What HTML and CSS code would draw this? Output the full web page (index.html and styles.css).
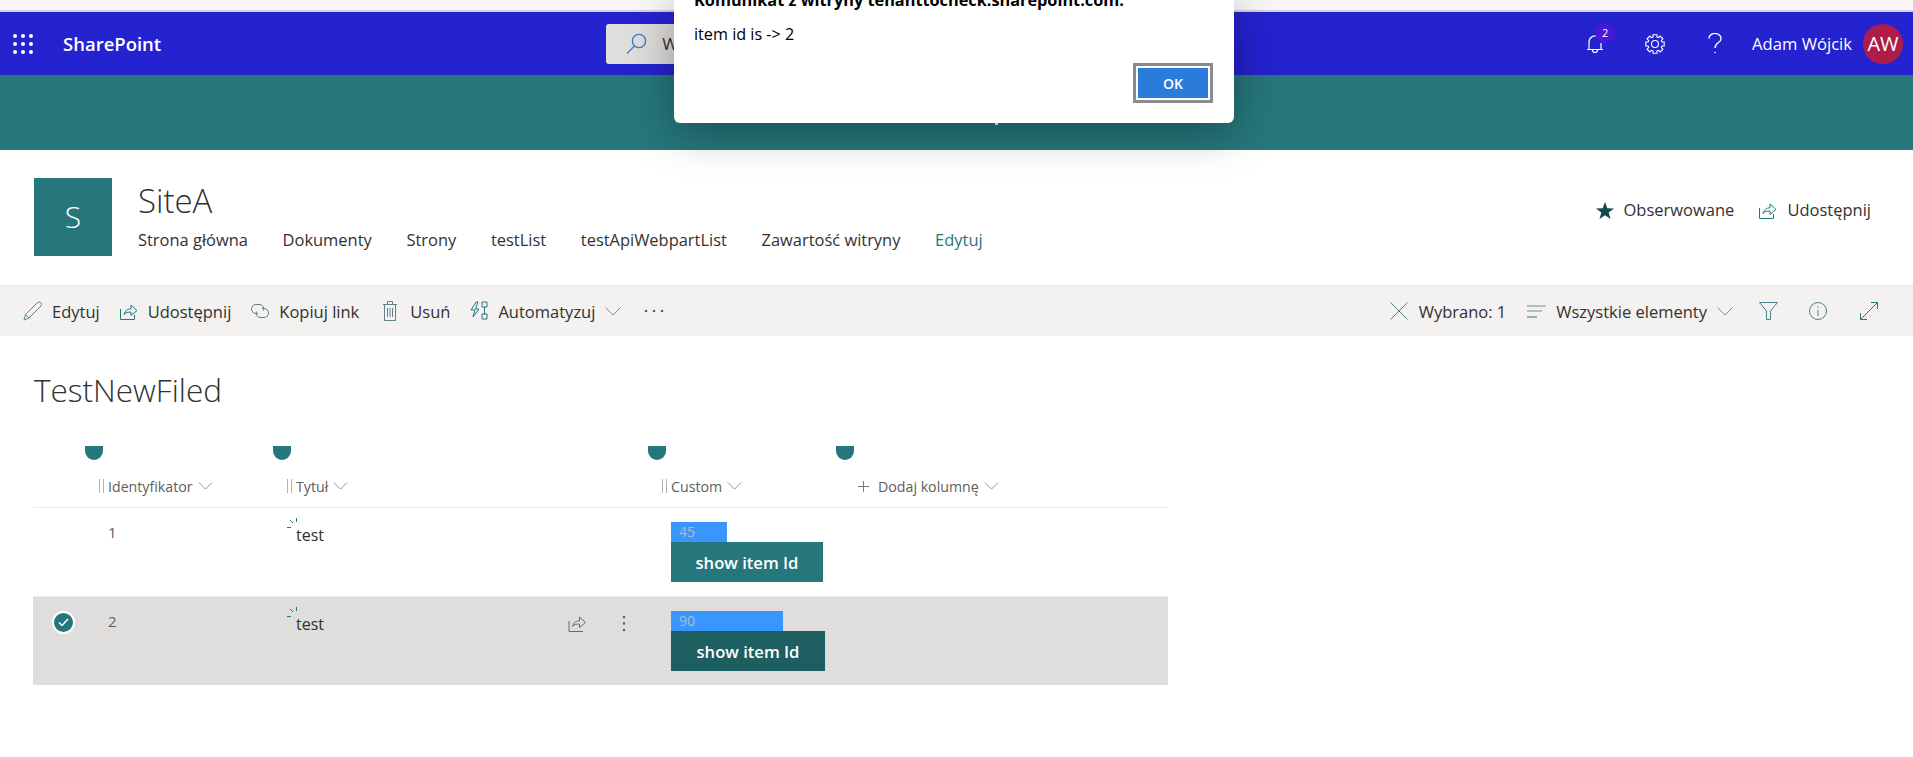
FILE: index.html
```html
<!DOCTYPE html>
<html lang="pl">
<head>
    <meta charset="UTF-8">
    <meta name="viewport" content="width=device-width, initial-scale=1.0">
    <title>TestNewFiled</title>
    <link rel="stylesheet" href="styles.css">
</head>
<body>
    <div class="browser-strip"></div>

    <header class="suite-bar">
        <svg class="waffle" width="20" height="20" viewBox="0 0 20 20" fill="#fff">
            <circle cx="2" cy="2" r="2"/><circle cx="10" cy="2" r="2"/><circle cx="18" cy="2" r="2"/>
            <circle cx="2" cy="10" r="2"/><circle cx="10" cy="10" r="2"/><circle cx="18" cy="10" r="2"/>
            <circle cx="2" cy="18" r="2"/><circle cx="10" cy="18" r="2"/><circle cx="18" cy="18" r="2"/>
        </svg>
        <span class="brand">SharePoint</span>
        <div class="search">
            <svg width="21" height="21" viewBox="0 0 21 21" fill="none" stroke="#3a7cc4" stroke-width="1.3">
                <circle cx="13" cy="8" r="6.6"/><path d="M8.5 13 1 20.5"/>
            </svg>
            <span class="search-text">W</span>
        </div>
        <div class="suite-right">
            <div class="bell">
                <svg width="18" height="20" viewBox="0 0 18 20" fill="none" stroke="#fff" stroke-width="1.2">
                    <path d="M3 15V8a6 6 0 0 1 9-5.2M15 9v6M1 15.5h16M6.5 16a2.5 2.5 0 0 0 5 0"/>
                </svg>
                <span class="badge">2</span>
            </div>
            <svg class="gear" width="20" height="20" viewBox="0 0 20 20" fill="none" stroke="#fff" stroke-width="1.1">
                <polygon points="8.02,3.08 8.05,.81 11.95,.81 11.98,3.08 13.49,3.7 15.12,2.12 17.88,4.88 16.3,6.51 16.92,8.02 19.19,8.05 19.19,11.95 16.92,11.98 16.3,13.49 17.88,15.12 15.12,17.88 13.49,16.3 11.98,16.92 11.95,19.19 8.05,19.19 8.02,16.92 6.51,16.3 4.88,17.88 2.12,15.12 3.7,13.49 3.08,11.98 .81,11.95 .81,8.05 3.08,8.02 3.7,6.51 2.12,4.88 4.88,2.12 6.51,3.7"/>
                <circle cx="10" cy="10" r="3.5"/>
            </svg>
            <svg class="help" width="14" height="21" viewBox="0 0 14 21" fill="none" stroke="#fff" stroke-width="1.3">
                <path d="M1 5.5a6 5 0 1 1 9.5 4c-2.5 1.7-3.5 2.5-3.5 5.5"/>
                <circle cx="7" cy="19.5" r=".8" fill="#fff" stroke="none"/>
            </svg>
            <span class="user-name">Adam Wójcik</span>
            <span class="avatar">AW</span>
        </div>
    </header>

    <div class="hero"></div>

    <section class="site-header">
        <div class="site-logo">S</div>
        <div class="site-info">
            <div class="site-title">SiteA</div>
            <nav class="site-nav">
                <a>Strona główna</a>
                <a>Dokumenty</a>
                <a>Strony</a>
                <a>testList</a>
                <a>testApiWebpartList</a>
                <a>Zawartość witryny</a>
                <a class="nav-edit">Edytuj</a>
            </nav>
        </div>
        <div class="site-actions">
            <span class="action">
                <svg width="18" height="17" viewBox="0 0 18 17" fill="#134a4e"><path d="M9 0l2.3 6.2 6.7.3-5.3 4.1 1.8 6.4L9 13.3 3.5 17l1.8-6.4L0 6.5l6.7-.3z"/></svg>
                Obserwowane
            </span>
            <span class="action">
                <svg width="18" height="17" viewBox="0 0 18 17" fill="none" stroke="#26777c"><path d="M.5 6v10.5h14V12M4 11.5C5 7.5 8 5.8 11 5.8V2l6 5.5-6 5V9C8 9 5.500 9.500 4 11.5z"/></svg>
                Udostępnij
            </span>
        </div>
    </section>

    <div class="command-bar">
        <div class="commands">
            <span class="cmd">
                <svg width="19" height="20" viewBox="0 0 19 20" fill="none" stroke="#5f8285"><path d="M1 19l1.5-5.5L14.5 1.5a2.5 2.5 0 0 1 3.5 3.5L6 17zM2.5 13.5 6 17"/></svg>
                Edytuj
            </span>
            <span class="cmd">
                <svg width="18" height="17" viewBox="0 0 18 17" fill="none" stroke="#26777c"><path d="M.5 6v10.5h14V12M4 11.5C5 7.5 8 5.8 11 5.8V2l6 5.5-6 5V9C8 9 5.500 9.500 4 11.5z"/></svg>
                Udostępnij
            </span>
            <span class="cmd">
                <svg width="18" height="14" viewBox="0 0 18 14" fill="none" stroke="#5f8285"><path d="M7 9.5H5a4.5 4.5 0 0 1 0-9h4a4.5 4.5 0 0 1 3.5 6"/><path d="M11 4.5h2a4.500 4.500 0 0 1 0 9H9a4.500 4.500 0 0 1-3.500-6"/></svg>
                Kopiuj link
            </span>
            <span class="cmd cmd-trash">
                <svg width="16" height="20" viewBox="0 0 15 20" fill="none" stroke="#5f8285"><path d="M2 4v15.5h11V4M.5 3.5h14M5 3.5V.5h5v3M5 7v9M7.5 7v9M10 7v9"/></svg>
                Usuń
            </span>
            <span class="cmd">
                <svg width="18" height="20" viewBox="0 0 18 20" fill="none" stroke="#26777c"><path d="M6 1 1 9h4l-2 7 6-8H5.5L8 1zM12 1h5v5h-5zM12 13h5v5h-5zM14.5 6v7"/></svg>
                Automatyzuj
            </span>
            <svg class="chev cmd-chev" width="16" height="9" viewBox="0 0 16 9"><path d="M.5.5 8 8 15.5.5"/></svg>
            <svg class="more" width="20" height="4" viewBox="0 0 20 4" fill="#605e5c"><circle cx="2" cy="2" r="1.3"/><circle cx="10" cy="2" r="1.3"/><circle cx="18" cy="2" r="1.3"/></svg>
        </div>
        <div class="commands commands-right">
            <span class="cmd cmd-close">
                <svg width="18" height="18" viewBox="0 0 18 18" fill="none" stroke="#4d8286"><path d="M.5.5l17 17M17.5.5l-17 17"/></svg>
                Wybrano: 1
            </span>
            <span class="cmd cmd-view">
                <svg width="19" height="13" viewBox="0 0 19 13" fill="none"><path d="M0 1h19M0 6h15" stroke="#7a8788"/><path d="M0 12h10" stroke="#26777c"/></svg>
                Wszystkie elementy
            </span>
            <svg class="chev view-chev" width="16" height="9" viewBox="0 0 16 9"><path d="M.5.5 8 8 15.5.5"/></svg>
            <svg class="tool-funnel" width="19" height="18" viewBox="0 0 19 18" fill="none" stroke="#4d8286"><path d="M.5.5h18l-7 8.5v8.500h-4V9z"/></svg>
            <svg class="tool-info" width="18" height="18" viewBox="0 0 18 18" fill="none" stroke="#4d8286"><circle cx="9" cy="9" r="8.5"/><path d="M9 8v6M9 4.500v1.500"/></svg>
            <svg class="tool-expand" width="18" height="18" viewBox="0 0 18 18" fill="none" stroke="#26777c"><path d="M.5 17.5l17-17M11 .5h6.5V7M.5 11v6.500H7"/></svg>
        </div>
    </div>

    <main class="content">
        <h1 class="list-title">TestNewFiled</h1>

        <div class="handles">
            <span class="handle"></span>
            <span class="handle"></span>
            <span class="handle"></span>
            <span class="handle"></span>
        </div>

        <div class="list-row list-head">
            <div></div>
            <div class="col-head"><span class="grip"></span>Identyfikator<svg class="chev" width="15" height="8" viewBox="0 0 16 9"><path d="M.5.5 8 8 15.5.5"/></svg></div>
            <div class="col-head"><span class="grip"></span>Tytuł<svg class="chev" width="15" height="8" viewBox="0 0 16 9"><path d="M.5.5 8 8 15.5.5"/></svg></div>
            <div class="col-head"><span class="grip"></span>Custom<svg class="chev" width="15" height="8" viewBox="0 0 16 9"><path d="M.5.5 8 8 15.5.5"/></svg></div>
            <div class="col-head col-add">
                <svg width="11" height="11" viewBox="0 0 11 11" stroke="#7a7876"><path d="M5.5 0v11M0 5.5h11"/></svg>
                Dodaj kolumnę<svg class="chev" width="15" height="8" viewBox="0 0 16 9"><path d="M.5.5 8 8 15.5.5"/></svg>
            </div>
        </div>

        <div class="list-row item">
            <div></div>
            <div class="cell-id">1</div>
            <div class="cell-title">
                <svg class="spinner" width="11" height="11" viewBox="0 0 11 11" fill="none" stroke="#26777c"><path d="M9.5 0v4M3 2l3 3M0 9.5h4"/></svg>
                <span>test</span>
            </div>
            <div class="cell-custom">
                <div class="bar" style="width:56px">45</div>
                <button class="show-btn">show item Id</button>
            </div>
        </div>

        <div class="list-row item selected">
            <div class="cell-check">
                <span class="check">
                    <svg width="11" height="9" viewBox="0 0 11 9" fill="none" stroke="#fff" stroke-width="1.5"><path d="M1 4.5 4 7.5 10 1"/></svg>
                </span>
            </div>
            <div class="cell-id">2</div>
            <div class="cell-title">
                <svg class="spinner" width="11" height="11" viewBox="0 0 11 11" fill="none" stroke="#26777c"><path d="M9.5 0v4M3 2l3 3M0 9.5h4"/></svg>
                <span>test</span>
                <svg class="row-share" width="19" height="17" viewBox="0 0 18 17" fill="none" stroke="#6b6a68"><path d="M.5 6v10.5h14M4 11.5C5 7.5 8 5.8 11 5.8V2l6 5.5-6 5V9C8 9 5.500 9.500 4 11.5z"/></svg>
                <svg class="row-more" width="4" height="17" viewBox="0 0 4 17" fill="#605e5c"><circle cx="2" cy="2" r="1.2"/><circle cx="2" cy="8.5" r="1.2"/><circle cx="2" cy="15" r="1.2"/></svg>
            </div>
            <div class="cell-custom">
                <div class="bar" style="width:112px">90</div>
                <button class="show-btn show-btn-active">show item Id</button>
            </div>
        </div>
    </main>

    <div class="dialog">
        <div class="dialog-title">Komunikat z witryny tenanttocheck.sharepoint.com:</div>
        <div class="dialog-text">item id is -&gt; 2</div>
        <div class="dialog-buttons"><button class="dialog-ok">OK</button></div>
    </div>
</body>
</html>
```

FILE: styles.css
```css
* {
    box-sizing: border-box;
}

body {
    margin: 0;
    font-family: "Open Sans", "Noto Sans", sans-serif;
    color: #323130;
    background-color: #fff;
    overflow: hidden;
}

.browser-strip {
    height: 12px;
    background-color: #f7f7f7;
    border-bottom: 2px solid #d2d2d2;
}

/* top bar */
.suite-bar {
    height: 63px;
    display: flex;
    align-items: center;
    background-color: #2522d0;
    color: #fff;
}

.waffle {
    margin-left: 13px;
}

.brand {
    margin-left: 30px;
    font-size: 18.5px;
    font-weight: 600;
}

.search {
    width: 300px;
    height: 40px;
    margin-left: 445px;
    padding-left: 20px;
    display: flex;
    align-items: center;
    gap: 15px;
    border-radius: 3px;
    background-color: #e0dedc;
    color: #323130;
    font-size: 17px;
}

.suite-right {
    margin-left: auto;
    display: flex;
    align-items: center;
    padding-right: 10px;
}

.bell {
    position: relative;
    display: flex;
    margin-right: 41px;
}

.badge {
    position: absolute;
    top: -11px;
    left: 9px;
    width: 20px;
    height: 20px;
    border-radius: 50%;
    background-color: #4a17d8;
    font-size: 11px;
    line-height: 20px;
    text-align: center;
}

.gear {
    margin-right: 43px;
}

.help {
    margin-right: 30px;
}

.user-name {
    font-size: 16.6px;
    margin-right: 11px;
}

.avatar {
    width: 40px;
    height: 40px;
    border-radius: 50%;
    background-color: #ae1d4a;
    font-size: 20px;
    line-height: 40px;
    text-align: center;
}

.hero {
    height: 75px;
    background-color: #26777c;
}

/* site header */
.site-header {
    height: 135px;
    padding: 28px 42px 0 34px;
    display: flex;
    align-items: flex-start;
}

.site-logo {
    width: 78px;
    height: 78px;
    background-color: #26777c;
    color: #fff;
    font-size: 30px;
    font-weight: 300;
    line-height: 78px;
    text-align: center;
}

.site-info {
    margin-left: 26px;
}

.site-title {
    height: 46px;
    font-size: 33px;
    font-weight: 300;
    line-height: 46px;
}

.site-nav {
    display: flex;
    gap: 34.7px;
    margin-top: 4px;
    font-size: 16.45px;
    line-height: 24px;
}

.nav-edit {
    color: #26777c;
}

.site-actions {
    margin-left: auto;
    margin-top: 20px;
    display: flex;
    gap: 25px;
    font-size: 16.5px;
    line-height: 24px;
}

.action {
    display: flex;
    align-items: center;
    gap: 10px;
}

/* command bar */
.command-bar {
    height: 51px;
    padding: 0 35px 0 23px;
    display: flex;
    align-items: center;
    justify-content: space-between;
    background-color: #f3f2f1;
    border-top: 1px solid #e8e7e6;
}

.commands {
    display: flex;
    align-items: center;
    gap: 20px;
}

.commands-right {
    gap: 21px;
}

.cmd {
    display: flex;
    align-items: center;
    gap: 10px;
    font-size: 16.5px;
}

.cmd-close {
    gap: 11px;
}

.cmd-trash {
    gap: 12px;
    margin-left: 3px;
}

.chev {
    fill: none;
    stroke: #8a8886;
}

.cmd-chev {
    margin-left: -10px;
}

.more {
    margin-left: 3px;
}

.view-chev {
    margin-left: -11px;
}

.tool-funnel {
    margin-left: 5px;
}

.tool-info {
    margin-left: 10px;
}

.tool-expand {
    margin-left: 12px;
}

/* list */
.content {
    padding-left: 33px;
}

.list-title {
    margin: 0;
    padding: 32px 0 0 1px;
    height: 110px;
    font-size: 31.5px;
    font-weight: 300;
    line-height: 44px;
}

.handles {
    height: 14px;
    padding-left: 52px;
    display: grid;
    grid-template-columns: 187.5px 375px 188px 18px;
}

.handle {
    width: 18px;
    height: 14px;
    border-radius: 0 0 9px 9px;
    background-color: #26777c;
}

.list-row {
    width: 1135px;
    display: grid;
    grid-template-columns: 66px 188px 375px 196px 1fr;
}

.list-head {
    height: 48px;
    padding-top: 9px;
    border-bottom: 1px solid #edebe9;
    font-size: 14.2px;
    color: #605e5c;
}

.col-head {
    display: flex;
    align-items: center;
    height: 34px;
}

.col-head .chev {
    margin-left: 5px;
}

.grip {
    width: 5px;
    height: 14px;
    margin-right: 4px;
    border-left: 1px solid #b5b3b1;
    border-right: 1px solid #b5b3b1;
}

.col-add svg:first-child {
    margin-right: 9px;
}

.item {
    height: 88px;
    padding-top: 14px;
}

.selected {
    height: 89px;
    background-color: #e0dedc;
    border-top: 1px solid #ecebe9;
    padding-top: 14px;
}

.cell-check {
    padding-left: 19px;
}

.check {
    width: 23px;
    height: 23px;
    display: flex;
    align-items: center;
    justify-content: center;
    border-radius: 50%;
    border: 2px solid #fff;
    background-color: #26777c;
}

.cell-id {
    padding-left: 9px;
    font-size: 15px;
    color: #605e5c;
    line-height: 21px;
}

.cell-title {
    position: relative;
    display: flex;
    align-items: flex-start;
    padding: 1px 0 0 9px;
    font-size: 16px;
    line-height: 24px;
}

.spinner {
    position: absolute;
    left: 0;
    top: -4px;
}

.row-share {
    margin-left: 244px;
    margin-top: 3px;
}

.row-more {
    margin-left: 35px;
    margin-top: 3px;
}

.cell-custom {
    padding-left: 9px;
}

.bar {
    height: 20px;
    padding-left: 8px;
    background-color: #3a96ff;
    color: #b4bcc6;
    font-size: 14px;
    line-height: 20px;
}

.show-btn {
    display: block;
    width: 152px;
    height: 40px;
    padding: 0;
    border: none;
    background-color: #26777c;
    color: #fff;
    font-family: inherit;
    font-size: 16.6px;
    font-weight: 600;
}

.show-btn-active {
    width: 154px;
    background-color: #1d5e60;
}

/* alert box, sits over the page */
.dialog {
    position: absolute;
    top: 0;
    left: 674px;
    width: 560px;
    height: 123px;
    padding: 0 21px 20px 20px;
    display: flex;
    flex-direction: column;
    border-radius: 0 0 6px 6px;
    background-color: #fff;
    box-shadow: 0 8px 45px rgba(0, 0, 0, 0.35);
    color: #000;
}

.dialog::after {
    content: "";
    position: absolute;
    left: 321px;
    bottom: -2px;
    width: 3px;
    height: 2px;
    background-color: #b9c4c5;
}

.dialog-title {
    margin-top: -10px;
    font-size: 16.3px;
    font-weight: 700;
    line-height: 20px;
    white-space: nowrap;
}

.dialog-text {
    margin-top: 14px;
    font-size: 16.2px;
    line-height: 20px;
}

.dialog-buttons {
    margin-top: auto;
    display: flex;
    justify-content: flex-end;
}

.dialog-ok {
    width: 80px;
    height: 40px;
    border: 3px solid #888c92;
    outline: none;
    box-shadow: inset 0 0 0 2px #fff;
    background-color: #2b7bdb;
    color: #fff;
    font-family: inherit;
    font-size: 14px;
    font-weight: 600;
}
```
